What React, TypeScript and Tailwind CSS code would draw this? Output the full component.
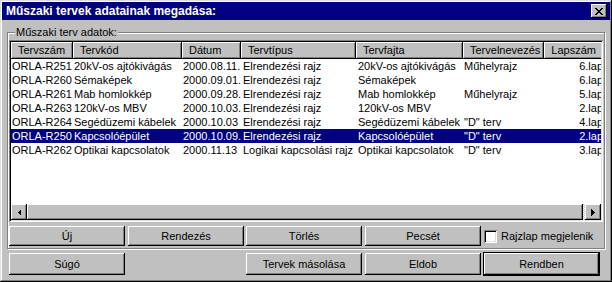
import React from "react";

const raised =
  "shadow-[inset_-1px_-1px_#000,inset_1px_1px_#fff,inset_-2px_-2px_#808080]";

const columns = [
  { title: "Tervszám", w: "w-[62px]" },
  { title: "Tervkód", w: "w-[109px]" },
  { title: "Dátum", w: "w-[59px]" },
  { title: "Tervtípus", w: "w-[115px]" },
  { title: "Tervfajta", w: "w-[107px]" },
  { title: "Tervelnevezés", w: "w-[81px]" },
];

const rows = [
  ["ORLA-R251", "20kV-os ajtókivágás", "2000.08.11.", "Elrendezési rajz", "20kV-os ajtókivágás", "Műhelyrajz", "6.lap"],
  ["ORLA-R260", "Sémaképek", "2000.09.01.", "Elrendezési rajz", "Sémaképek", "", "6.lap"],
  ["ORLA-R261", "Mab homlokkép", "2000.09.28.", "Elrendezési rajz", "Mab homlokkép", "Műhelyrajz", "5.lap"],
  ["ORLA-R263", "120kV-os MBV", "2000.10.03.", "Elrendezési rajz", "120kV-os MBV", "", "2.lap"],
  ["ORLA-R264", "Segédüzemi kábelek", "2000.10.03", "Elrendezési rajz", "Segédüzemi kábelek", '"D" terv', "4.lap"],
  ["ORLA-R250", "Kapcsolóépület", "2000.10.09.", "Elrendezési rajz", "Kapcsolóépület", '"D" terv', "2.lap"],
  ["ORLA-R262", "Optikai kapcsolatok", "2000.11.13", "Logikai kapcsolási rajz", "Optikai kapcsolatok", '"D" terv', "3.lap"],
];

function Button({ label, className = "" }: { label: string; className?: string }) {
  return (
    <div
      className={`w-[116px] flex items-center justify-center bg-[#c0c0c0] ${raised} ${className}`}
    >
      {label}
    </div>
  );
}

function Arrow({ dir }: { dir: "left" | "right" }) {
  return (
    <div className={`w-[16px] h-[16px] flex items-center justify-center bg-[#c0c0c0] ${raised}`}>
      <svg width="4" height="7" viewBox="0 0 4 7" shapeRendering="crispEdges">
        {dir === "left" ? (
          <path d="M4 0 L4 7 L0.5 3.5 Z" fill="#000" />
        ) : (
          <path d="M0 0 L0 7 L3.5 3.5 Z" fill="#000" />
        )}
      </svg>
    </div>
  );
}

export default function App() {
  return (
    <div className="w-[612px] h-[282px] p-[2px] flex flex-col bg-[#c0c0c0] text-[11px] text-black font-['Liberation_Sans',Arial,sans-serif] shadow-[inset_-1px_-1px_#000,inset_1px_1px_#dfdfdf,inset_-2px_-2px_#808080,inset_2px_2px_#fff]">
      {/* title bar */}
      <div className="h-[18px] bg-[#000080] flex items-center justify-between pl-[4px] pr-[3px]">
        <span className="text-white font-bold text-[12px] leading-none">
          Műszaki tervek adatainak megadása:
        </span>
        <div className={`w-[16px] h-[14px] bg-[#c0c0c0] flex items-center justify-center ${raised}`}>
          <svg width="8" height="7" viewBox="0 0 8 7" shapeRendering="crispEdges">
            <path
              d="M0 0h2v1h1v1h2v-1h1v-1h2v1h-1v1h-1v1h-1v1h1v1h1v1h1v1h-2v-1h-1v-1h-2v1h-1v1h-2v-1h1v-1h1v-1h1v-1h-1v-1h-1v-1h-1z"
              fill="#000"
            />
          </svg>
        </div>
      </div>

      {/* group box */}
      <div className="relative mt-[12px] ml-[5px] w-[598px] h-[217px] border border-[#808080] shadow-[inset_1px_1px_#fff,1px_1px_#fff] pt-[7px] pl-[1px] flex flex-col">
        <span className="absolute left-[7px] top-[-7px] px-[1px] bg-[#c0c0c0] leading-[13px]">
          Műszaki terv adatok:
        </span>

        {/* list view */}
        <div className="w-[594px] h-[182px] p-[2px] bg-white flex flex-col shadow-[inset_1px_1px_#808080,inset_-1px_-1px_#fff,inset_2px_2px_#000,inset_-2px_-2px_#dfdfdf]">
          <div className="flex-1 overflow-hidden">
            <div className="flex h-[17px] bg-[#c0c0c0] w-[700px]">
              {columns.map((c) => (
                <div key={c.title} className={`${c.w} pl-[7px] flex items-center ${raised}`}>
                  {c.title}
                </div>
              ))}
              <div className={`w-[62px] pr-[10px] flex items-center justify-end ${raised}`}>Lapszám</div>
            </div>
            {rows.map((r, i) => (
              <div
                key={r[0]}
                className={`flex h-[14px] leading-[14px] w-[700px] whitespace-nowrap ${
                  i === 5 ? "bg-[#000080] text-white w-[606px]" : ""
                }`}
              >
                <div className="w-[62px] pl-[1px] overflow-hidden">{r[0]}</div>
                <div className="w-[109px] pl-[1px] overflow-hidden">{r[1]}</div>
                <div className="w-[59px] pl-[1px] overflow-hidden">{r[2]}</div>
                <div className="w-[115px] pl-[2px] overflow-hidden">{r[3]}</div>
                <div className="w-[107px] pl-[2px] overflow-hidden">{r[4]}</div>
                <div className="w-[81px] pl-[1px] overflow-hidden">{r[5]}</div>
                <div className="w-[59px] text-right overflow-hidden">{r[6]}</div>
              </div>
            ))}
          </div>
          {/* horizontal scrollbar */}
          <div className="h-[16px] flex bg-[#c0c0c0]">
            <Arrow dir="left" />
            <div className="flex-1 flex bg-[repeating-conic-gradient(#fff_0_25%,#c0c0c0_0_50%)] bg-[length:2px_2px]">
              <div className={`flex-1 mr-[2px] bg-[#c0c0c0] ${raised}`} />
            </div>
            <Arrow dir="right" />
          </div>
        </div>

        {/* first button row */}
        <div className="flex h-[20px] mt-[4px]">
          <Button label="Új" />
          <Button label="Rendezés" className="ml-[3px]" />
          <Button label="Törlés" className="ml-[2px]" />
          <Button label="Pecsét" className="ml-[3px]" />
          <div className="ml-[3px] flex items-center">
            <div className="w-[13px] h-[13px] bg-white shadow-[inset_1px_1px_#808080,inset_-1px_-1px_#fff,inset_2px_2px_#000,inset_-2px_-2px_#dfdfdf]" />
            <span className="ml-[4px]">Rajzlap megjelenik</span>
          </div>
        </div>
      </div>

      {/* second button row */}
      <div className="flex items-center h-[24px] mt-[3px]">
        <Button label="Súgó" className="h-[22px] ml-[7px]" />
        <Button label="Tervek másolása" className="h-[22px] ml-[121px]" />
        <Button label="Eldob" className="h-[22px] ml-[3px]" />
        <div className="ml-[2px] w-[117px] h-[24px] border border-black flex">
          <Button label="Rendben" className="flex-1 w-auto" />
        </div>
      </div>
    </div>
  );
}
